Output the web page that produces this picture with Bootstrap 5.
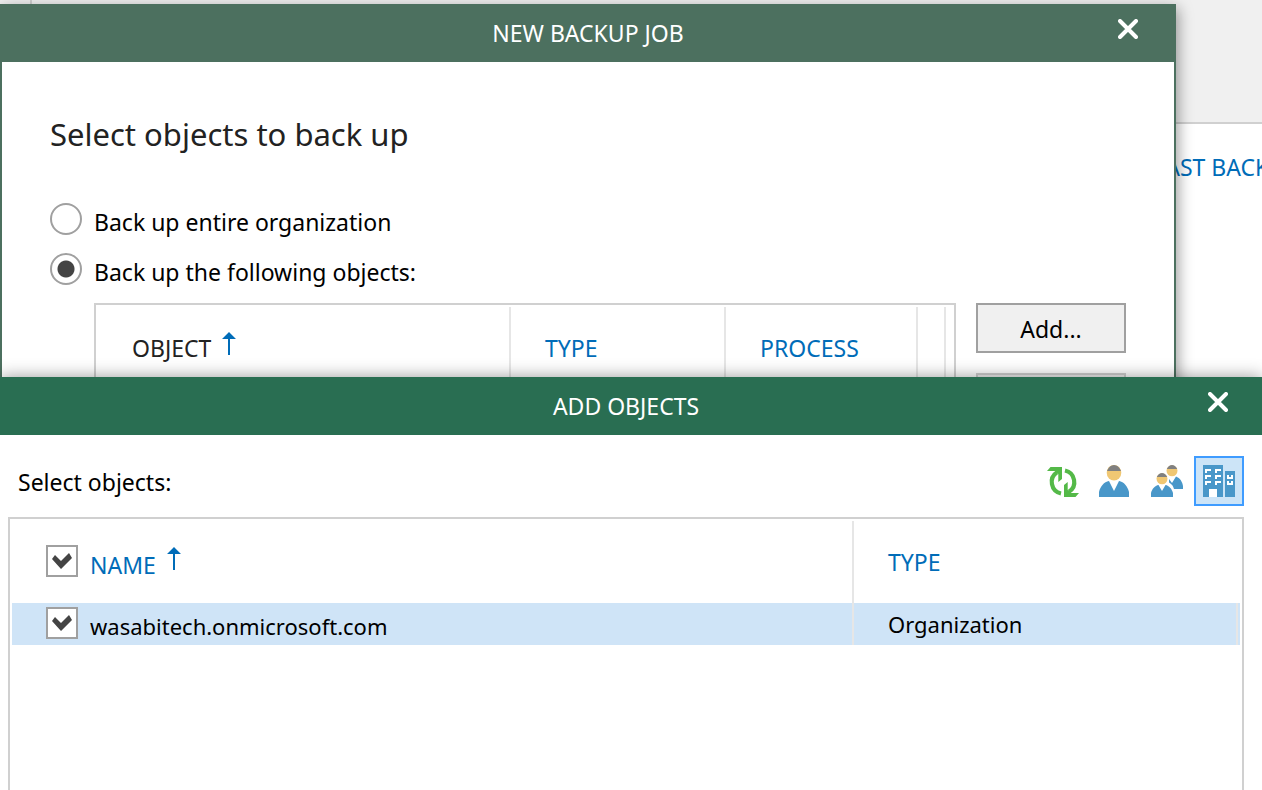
<!DOCTYPE html>
<html lang="en">
<head>
<meta charset="utf-8">
<meta name="viewport" content="width=device-width, initial-scale=1">
<title>New Backup Job</title>
<link href="https://cdn.jsdelivr.net/npm/bootstrap@5.3.0/dist/css/bootstrap.min.css" rel="stylesheet">
<style>
  body { font-family: "Noto Sans", sans-serif; font-size: 23px; line-height: 32px; color: #000; background: #fff; }
  a { color: #006cb8; text-decoration: none; }

  /* Console window behind the dialogs */
  .console-top { height: 124px; background: #f0f0f0; border-bottom: 2px solid #d0d0d0; }
  .console-pane { width: 32px; border-right: 2px solid #d0d0d0; }
  .console-head { padding: 27px 0; margin-right: -38px; }

  /* Dialog windows */
  .win { background: #fff; box-shadow: 0 0 16px rgba(0, 0, 0, .4); }
  .win-job { top: 4px; left: 0; right: 86px; bottom: 0; border: 2px solid #4c705f; border-top: 0; box-shadow: 2px 4px 14px rgba(0, 0, 0, .4); }
  .win-add { top: 377px; left: 0; right: 0; bottom: 0; }
  .win-title { height: 58px; color: #fff; }
  .win-title h1 { font-size: 23px; line-height: 32px; font-weight: 400; }
  .win-job .win-title { background: #4c705f; padding-left: 92px; }
  .win-add .win-title { background: #296e52; padding-left: 78px; }
  .win-close { width: 92px; height: 50px; border: 0; padding: 0; background: none; color: #fff; }
  .win-add .win-close { width: 88px; }

  .job-body { padding: 51px 48px 0; }
  .job-body h2 { font-size: 31px; line-height: 42px; font-weight: 400; color: #222; margin-bottom: 48px; }
  .choice { height: 50px; gap: 12px; }
  .choice label { padding-top: 3px; }
  .tick { appearance: none; flex: none; width: 32px; height: 32px; margin: 0; border: 2px solid #a0a0a0; background: #fff center no-repeat; }
  .tick[type=radio] { border-radius: 50%; }
  .tick[type=radio]:checked { background-image: radial-gradient(circle, #444 8px, transparent 9px); }
  .tick[type=checkbox]:checked { background-image: url("data:image/svg+xml,%3Csvg xmlns='http://www.w3.org/2000/svg' width='20' height='16'%3E%3Cpath d='M0 6 3 2 9 8 17 0 20 5 9 16Z' fill='%23444'/%3E%3C/svg%3E"); }

  .list-box { border: 2px solid #d0d0d0; padding: 2px; }
  .grid-table { width: 100%; table-layout: fixed; border-collapse: separate; border-spacing: 0; }
  .grid-table th { font-weight: 400; }
  .grid-table th, .grid-table td { padding: 0; }
  .line-end { border-right: 2px solid #e6e6e6; }
  .job-objects { margin-left: 44px; gap: 20px; }
  .job-objects .list-box { height: 120px; }
  .job-objects th { height: 82px; padding-left: 34px; color: #222; }
  .job-objects th.slim { padding: 0; }
  .sort-up { width: 14px; height: 24px; margin-left: 11px; }
  .push { width: 150px; height: 50px; padding: 2px 0 0; border: 2px solid #a0a0a0; background: #f0f0f0; color: #000; }
  .push:disabled { border-color: #d0d0d0; }

  .add-bar { padding: 21px 18px 11px; }
  .add-bar > span { padding-top: 2px; }
  .tool { width: 50px; height: 50px; padding: 0; border: 2px solid transparent; background: none; }
  .tool.on { border-color: #3f9cff; background: #cce4f7; }
  .add-list { margin: 0 18px 0 8px; border-bottom: 0; }
  .add-list th { height: 82px; }
  .add-list td { height: 42px; background: #cfe4f7; font-size: 22px; }
  .name-cell { padding-left: 34px; gap: 12px; height: 34px; }
  .name-cell label { padding-top: 3px; }
  .add-list .type-cell { padding-left: 34px; }
</style>
</head>
<body class="vh-100 overflow-hidden position-relative">

<div class="console-top d-flex"><div class="console-pane"></div></div>
<div class="console-head text-end text-nowrap"><a href="#">LAST BACKUP</a></div>

<section class="win win-job position-absolute">
  <header class="win-title d-flex">
    <h1 class="flex-grow-1 text-center mb-0 align-self-center">NEW BACKUP JOB</h1>
    <button type="button" class="win-close" aria-label="Close">
      <svg class="d-block m-auto" width="20" height="20" viewBox="0 0 20 20" stroke="currentColor" stroke-width="4" stroke-linecap="round"><path d="M2 2 18 18M18 2 2 18"/></svg>
    </button>
  </header>
  <div class="job-body">
    <h2>Select objects to back up</h2>
    <div class="choice d-flex align-items-start">
      <input class="tick" type="radio" name="scope" id="scopeAll">
      <label for="scopeAll">Back up entire organization</label>
    </div>
    <div class="choice d-flex align-items-start">
      <input class="tick" type="radio" name="scope" id="scopeSome" checked>
      <label for="scopeSome">Back up the following objects:</label>
    </div>
    <div class="job-objects d-flex">
      <div class="list-box flex-grow-1">
        <table class="grid-table">
          <colgroup><col><col style="width:215px"><col style="width:192px"><col style="width:28px"><col style="width:6px"></colgroup>
          <thead><tr>
            <th class="line-end" scope="col"><div class="d-flex align-items-center">
              <span>OBJECT</span>
              <svg class="sort-up mb-2" viewBox="0 0 14 24" fill="#006cb8"><path d="M7 0 14 7H8V23H6V7H0Z"/></svg>
            </div></th>
            <th class="line-end" scope="col"><a href="#">TYPE</a></th>
            <th class="line-end" scope="col"><a href="#">PROCESS</a></th>
            <th class="line-end slim"></th>
            <th class="slim"></th>
          </tr></thead>
        </table>
      </div>
      <div class="d-flex flex-column" style="gap:20px">
        <button type="button" class="push">Add...</button>
        <button type="button" class="push" disabled></button>
      </div>
    </div>
  </div>
</section>

<section class="win win-add position-absolute d-flex flex-column">
  <header class="win-title d-flex">
    <h1 class="flex-grow-1 text-center mb-0 align-self-center">ADD OBJECTS</h1>
    <button type="button" class="win-close" aria-label="Close">
      <svg class="d-block m-auto" width="20" height="20" viewBox="0 0 20 20" stroke="currentColor" stroke-width="4" stroke-linecap="round"><path d="M2 2 18 18M18 2 2 18"/></svg>
    </button>
  </header>
  <div class="add-bar d-flex align-items-center justify-content-between">
    <span>Select objects:</span>
    <div class="d-flex" style="gap:2px">
      <button type="button" class="tool" aria-label="Refresh">
        <svg class="d-block m-auto" width="32" height="32" viewBox="0 0 32 32">
          <g id="half"><path d="M0 6 3.5 2H15V14L11.3 17V9L8 6Z" fill="#54b948"/><path d="M10 7.3A11.7 11.7 0 0 0 14 28.5" fill="none" stroke="#54b948" stroke-width="4.200"/></g>
          <use href="#half" transform="rotate(180 16 17)"/>
        </svg>
      </button>
      <button type="button" class="tool" aria-label="Users">
        <svg class="d-block m-auto" width="32" height="32" viewBox="0 0 32 32">
          <ellipse cx="15" cy="7.8" rx="7.3" ry="7.8" fill="#f0c773"/>
          <path d="M8 6C9.500 2 12 0 15 0S20.500 2 22 6Z" fill="#808080"/>
          <path d="M0 32V27C1.500 21 5 17 10 16L15 26 20 16C25 17 28.500 21 30 27V32Z" fill="#4997c9"/>
        </svg>
      </button>
      <button type="button" class="tool" aria-label="Groups">
        <svg class="d-block m-auto" width="32" height="32" viewBox="0 0 32 32">
          <circle cx="21" cy="5.800" r="5.500" fill="#f0c773"/>
          <path d="M15.800 4C17 1.200 19 0 21 0S25 1.200 26.200 4Z" fill="#808080"/>
          <path d="M18 14 21 18 25 11.500C29 13 31.500 17 32 21V24H23C22 20 20 19 18 17.500Z" fill="#4997c9"/>
          <circle cx="11" cy="13.800" r="5.500" fill="#f0c773"/>
          <path d="M5.800 12C7 9.200 9 8 11 8S15 9.200 16.200 12Z" fill="#808080"/>
          <path d="M0 32V28C1 24 4 20.500 7.500 20L11 26 14.500 20C18 20.500 21 24 22 28V32Z" fill="#4997c9"/>
        </svg>
      </button>
      <button type="button" class="tool on" aria-label="Organizations" aria-pressed="true">
        <svg class="d-block m-auto" width="32" height="32" viewBox="0 0 32 32" shape-rendering="crispEdges">
          <path d="M0 0H20V32H0ZM22 6H32V32H22Z" fill="#4997c9"/>
          <path d="M6 24h8v8h-8zM2 4h6v2h-4v2h-2zM2 10h6v2h-4v2h-2zM2 16h6v2h-4v2h-2zM12 4h6v2h-4v2h-2zM12 10h6v2h-4v2h-2zM12 16h6v2h-4v2h-2zM24 10h2v2h2v-2h2v4h-6zM24 16h2v2h2v-2h2v4h-6z" fill="#fff"/>
        </svg>
      </button>
    </div>
  </div>
  <div class="list-box add-list flex-grow-1">
    <table class="grid-table">
      <colgroup><col><col style="width:384px"><col style="width:2px"></colgroup>
      <thead><tr>
        <th class="line-end" scope="col">
          <div class="name-cell d-flex align-items-start">
            <input class="tick" type="checkbox" id="all" aria-label="Select all" checked>
            <a href="#" class="d-flex align-items-center">
              <span class="pt-1">NAME</span>
              <svg class="sort-up mb-2" viewBox="0 0 14 24" fill="#006cb8"><path d="M7 0 14 7H8V23H6V7H0Z"/></svg>
            </a>
          </div>
        </th>
        <th class="type-cell" scope="col"><a href="#">TYPE</a></th>
        <th></th>
      </tr></thead>
      <tbody><tr>
        <td class="line-end">
          <div class="name-cell d-flex align-items-start">
            <input class="tick" type="checkbox" id="org1" checked>
            <label for="org1">wasabitech.onmicrosoft.com</label>
          </div>
        </td>
        <td class="type-cell line-end">Organization</td>
        <td></td>
      </tr></tbody>
    </table>
  </div>
</section>

<script src="https://cdn.jsdelivr.net/npm/bootstrap@5.3.0/dist/js/bootstrap.bundle.min.js"></script>
</body>
</html>
